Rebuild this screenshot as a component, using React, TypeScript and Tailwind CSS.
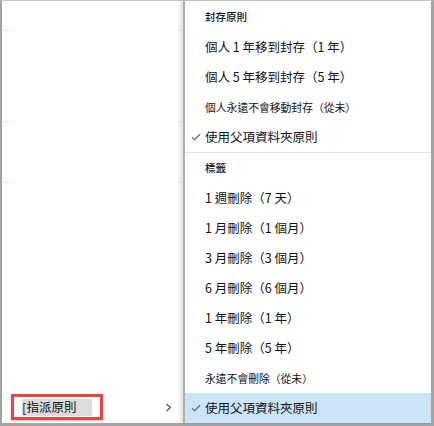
import React from 'react';

type Item = { label: string; kind: 'header' | 'item' | 'small'; checked?: boolean; active?: boolean };

const archive: Item[] = [
  { label: '封存原則', kind: 'header' },
  { label: '個人 1 年移到封存（1 年）', kind: 'item' },
  { label: '個人 5 年移到封存（5 年）', kind: 'item' },
  { label: '個人永遠不會移動封存（從未）', kind: 'small' },
  { label: '使用父項資料夾原則', kind: 'item', checked: true },
];

const tags: Item[] = [
  { label: '標籤', kind: 'header' },
  { label: '1 週刪除（7 天）', kind: 'item' },
  { label: '1 月刪除（1 個月）', kind: 'item' },
  { label: '3 月刪除（3 個月）', kind: 'item' },
  { label: '6 月刪除（6 個月）', kind: 'item' },
  { label: '1 年刪除（1 年）', kind: 'item' },
  { label: '5 年刪除（5 年）', kind: 'item' },
  { label: '永遠不會刪除（從未）', kind: 'small' },
  { label: '使用父項資料夾原則', kind: 'item', checked: true, active: true },
];

function Check() {
  return (
    <svg width="10" height="8" viewBox="0 0 10 8" className="shrink-0">
      <path d="M1 4.2 L3.6 6.8 L9 1.2" fill="none" stroke="#7a7a7a" strokeWidth="1.5" />
    </svg>
  );
}

function MenuRow({ item }: { item: Item }) {
  const size =
    item.kind === 'header'
      ? 'text-[10.5px] font-medium'
      : item.kind === 'small'
      ? 'text-[10.8px]'
      : 'text-[12.5px]';
  return (
    <div className={`flex h-[30px] items-center ${item.active ? 'bg-[#cce4f7]' : ''}`}>
      <div className="flex w-[20px] justify-center pl-[2px]">{item.checked && <Check />}</div>
      <span className={`${size} whitespace-nowrap text-[#111]`}>{item.label}</span>
    </div>
  );
}

function Tick() {
  return (
    <div className="flex h-px justify-between">
      <div className="w-[11px] bg-[#ececec]" />
      <div className="w-[5px] bg-[#ececec]" />
    </div>
  );
}

export default function App() {
  return (
    <div
      className="flex h-[426px] w-[434px] border-t border-l-2 border-r-[3px] border-b-[3px] border-t-[#c8c8c8] border-l-[#a3a3a3] border-r-[#a3a3a3] border-b-[#a3a3a3] bg-white"
      style={{ fontFamily: '"Noto Sans CJK TC", "Noto Sans", sans-serif' }}
    >
      {/* left pane */}
      <div className="flex w-[181px] flex-col">
        <div className="h-[29px]" />
        <Tick />
        <div className="h-[90px]" />
        <Tick />
        <div className="h-[60px]" />
        <Tick />
        <div className="flex-1" />
        <div className="flex h-[30px] items-center justify-between pb-[2px] pl-[9px] pr-[11px]">
          <div className="flex h-[26px] w-[92px] items-center border-[3px] border-[#e84545] pl-[8px] shadow-[0_1px_2px_rgba(0,0,0,0.25)]">
            <div className="flex h-[17px] w-[70px] items-center bg-[#dcdcdc]">
              <span className="text-[13px] leading-none text-[#222]">[</span>
              <span className="text-[12.5px] leading-none text-[#111]">指派原則</span>
            </div>
          </div>
          <svg width="7" height="9" viewBox="0 0 7 9">
            <path d="M1.5 1 L5.5 4.5 L1.5 8" fill="none" stroke="#555" strokeWidth="1.3" />
          </svg>
        </div>
      </div>

      {/* context menu */}
      <div className="flex flex-1 shadow-[-3px_0_3px_rgba(0,0,0,0.12)]">
        <div className="w-[2px] bg-[#b0b0b0]" />
        <div className="flex flex-1 flex-col pt-px">
          {archive.map((it) => (
            <MenuRow key={it.label + 'a'} item={it} />
          ))}
          <div className="h-px bg-[#e3e3e3]" />
          {tags.map((it) => (
            <MenuRow key={it.label + 't'} item={it} />
          ))}
        </div>
      </div>
    </div>
  );
}
